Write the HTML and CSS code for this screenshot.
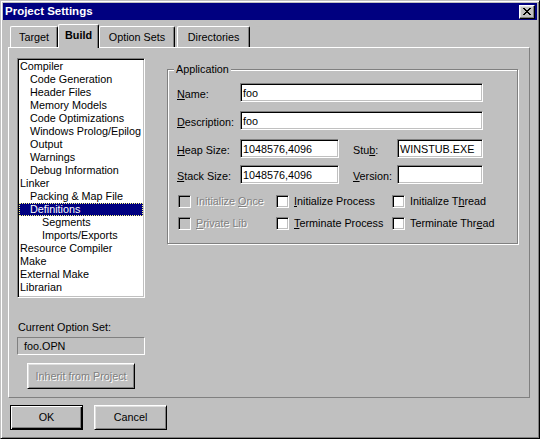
FILE: index.html
```html
<!DOCTYPE html>
<html>
<head>
<meta charset="utf-8">
<title>Project Settings</title>
<link rel="stylesheet" href="styles.css">
</head>
<body>
<div class="window">
  <div class="titlebar">
    <span class="title">Project Settings</span>
    <span class="close"><svg width="8" height="7" viewBox="0 0 8 7"><path d="M0 0h2v1H0zM6 0h2v1H6zM1 1h2v1H1zM5 1h2v1H5zM2 2h4v1H2zM3 3h2v1H3zM2 4h4v1H2zM1 5h2v1H1zM5 5h2v1H5zM0 6h2v1H0zM6 6h2v1H6z"/></svg></span>
  </div>
  <div class="tabs">
    <div class="tab t-target">Target</div>
    <div class="tab tab-active t-build">Build</div>
    <div class="tab t-opt">Option Sets</div>
    <div class="tab t-dir">Directories</div>
  </div>
  <div class="panel">
    <div class="leftcol">
      <ul class="list">
        <li>Compiler</li>
        <li class="l1">Code Generation</li>
        <li class="l1">Header Files</li>
        <li class="l1">Memory Models</li>
        <li class="l1">Code Optimizations</li>
        <li class="l1">Windows Prolog/Epilog</li>
        <li class="l1">Output</li>
        <li class="l1">Warnings</li>
        <li class="l1">Debug Information</li>
        <li>Linker</li>
        <li class="l1">Packing &amp; Map File</li>
        <li class="l1 sel">Definitions</li>
        <li class="l2">Segments</li>
        <li class="l2">Imports/Exports</li>
        <li>Resource Compiler</li>
        <li>Make</li>
        <li>External Make</li>
        <li>Librarian</li>
      </ul>
      <div class="cur-label">Current Option Set:</div>
      <div class="cur-field">foo.OPN</div>
      <div class="btn btn-disabled inherit"><span>Inherit from Project</span></div>
    </div>
    <fieldset class="group">
      <legend>Application</legend>
      <div class="form">
        <div class="lbl"><u>N</u>ame:</div>
        <div class="edit span4">foo</div>
        <div class="lbl"><u>D</u>escription:</div>
        <div class="edit span4">foo</div>
        <div class="lbl"><u>H</u>eap Size:</div>
        <div class="edit">1048576,4096</div>
        <div class="lbl c4">Stu<u>b</u>:</div>
        <div class="edit c5">WINSTUB.EXE</div>
        <div class="lbl"><u>S</u>tack Size:</div>
        <div class="edit">1048576,4096</div>
        <div class="lbl c4"><u>V</u>ersion:</div>
        <div class="edit c5"></div>
      </div>
      <div class="checks">
        <div class="chk disabled"><span class="box"></span><span>Initialize <u>O</u>nce</span></div>
        <div class="chk"><span class="box"></span><span><u>I</u>nitialize Process</span></div>
        <div class="chk"><span class="box"></span><span>Initialize T<u>h</u>read</span></div>
        <div class="chk disabled"><span class="box"></span><span><u>P</u>rivate Lib</span></div>
        <div class="chk"><span class="box"></span><span><u>T</u>erminate Process</span></div>
        <div class="chk"><span class="box"></span><span>Terminate Thr<u>e</u>ad</span></div>
      </div>
    </fieldset>
  </div>
  <div class="buttons">
    <div class="btn btn-default">OK</div>
    <div class="btn">Cancel</div>
  </div>
</div>
</body>
</html>
```

FILE: styles.css
```css
* { box-sizing: border-box; }
html, body { margin: 0; padding: 0; background: #c0c0c0; }
body {
  font-family: "Liberation Sans", Arial, sans-serif;
  font-size: 10.8px;
  line-height: 13px;
  color: #000;
}
u { text-decoration: underline; text-underline-offset: 1px; }

.window {
  width: 540px;
  height: 439px;
  border: 1px solid;
  border-color: #c0c0c0 #000 #000 #c0c0c0;
  box-shadow: inset 1px 1px #fff, inset -1px -1px #808080;
  padding: 2px;
  background: #c0c0c0;
  display: flex;
  flex-direction: column;
}

.titlebar {
  height: 17px;
  background: #000080;
  color: #fff;
  display: flex;
  align-items: center;
  justify-content: space-between;
  padding: 0 2px;
  flex: none;
}
.title { font-weight: bold; font-size: 11.5px; }
.close {
  width: 16px;
  height: 14px;
  background: #c0c0c0;
  border: 1px solid;
  border-color: #fff #000 #000 #fff;
  box-shadow: inset -1px -1px #808080, inset 1px 1px #dfdfdf;
  display: flex;
  align-items: center;
  justify-content: center;
}
.close svg { display: block; fill: #000; shape-rendering: crispEdges; }

.tabs {
  display: flex;
  align-items: flex-end;
  height: 23px;
  margin: 4px 0 0 7px;
  flex: none;
}
.tab {
  height: 21px;
  background: #c0c0c0;
  border-top: 1px solid #fff;
  border-left: 1px solid #fff;
  border-right: 1px solid #000;
  border-radius: 2px 2px 0 0;
  box-shadow: inset -1px 0 #808080;
  text-align: center;
  line-height: 20px;
  white-space: nowrap;
}
.tab-active {
  height: 24px;
  margin-bottom: -1px;
  font-weight: bold;
  position: relative;
  z-index: 1;
}
.t-target { width: 48px; }
.t-build { width: 41px; }
.t-opt { width: 76px; }
.t-dir { width: 73px; margin-left: 2px; }

.panel {
  width: 522px;
  height: 351px;
  margin-left: 5px;
  border: 1px solid;
  border-color: #fff #808080 #808080 #fff;
  display: flex;
  align-items: flex-start;
  padding: 10px 0 0 8px;
  flex: none;
}

.leftcol {
  width: 128px;
  display: flex;
  flex-direction: column;
  flex: none;
}
.list {
  list-style: none;
  margin: 0;
  padding: 1px;
  height: 240px;
  background: #fff;
  border: 1px solid;
  border-color: #808080 #fff #fff #808080;
  box-shadow: inset 1px 1px #000, inset -1px -1px #c0c0c0;
}
.list li {
  height: 13px;
  line-height: 13px;
  padding-left: 1px;
  white-space: nowrap;
}
.list li.l1 { padding-left: 11px; }
.list li.l2 { padding-left: 23px; }
.list li.sel {
  background: #000080;
  color: #fff;
  outline: 1px dotted #ffff80;
  outline-offset: -1px;
}
.cur-label { margin-top: 23px; padding-left: 1px; }
.cur-field {
  margin-top: 3px;
  height: 18px;
  border: 1px solid;
  border-color: #808080 #fff #fff #808080;
  padding-left: 6px;
  line-height: 16px;
}

.btn {
  display: flex;
  align-items: center;
  justify-content: center;
  background: #c0c0c0;
  border: 1px solid;
  border-color: #fff #000 #000 #fff;
  box-shadow: inset 1px 1px #dfdfdf, inset -1px -1px #808080;
  white-space: nowrap;
}
.btn-default {
  border-color: #000;
  box-shadow: inset 1px 1px #fff, inset -1px -1px #000, inset -2px -2px #808080;
}
.btn-disabled { color: #808080; text-shadow: 1px 1px 0 #fff; }
.inherit {
  margin-top: 8px;
  width: 108px;
  height: 26px;
  align-self: center;
}

.group {
  margin: 5px 0 0 22px;
  padding: 7px 0 13px 9px;
  width: 351px;
  min-width: 0;
  border: 1px solid #808080;
  box-shadow: inset 1px 1px #fff, 1px 1px #fff;
  flex: none;
}
.group legend {
  padding: 0 2px;
  margin-left: -3px;
  background: #c0c0c0;
  line-height: 13px;
}

.form {
  display: grid;
  grid-template-columns: 63px 99px 14px 44px 86px;
  grid-template-rows: 28px 28px 26px 19px;
  align-items: start;
}
.lbl { line-height: 19px; margin-top: 2px; white-space: nowrap; }
.edit {
  height: 19px;
  background: #fff;
  border: 1px solid;
  border-color: #808080 #fff #fff #808080;
  box-shadow: inset 1px 1px #000, inset -1px -1px #c0c0c0;
  padding: 1px 0 0 2px;
  line-height: 16px;
  white-space: nowrap;
  overflow: hidden;
}
.span4 { grid-column: 2 / 6; }
.c4 { grid-column: 4; }
.c5 { grid-column: 5; }

.checks {
  display: grid;
  grid-template-columns: 98px 116px auto;
  grid-template-rows: 13px 13px;
  row-gap: 9px;
  margin: 11px 0 0 1px;
}
.chk {
  display: flex;
  align-items: center;
  gap: 5px;
  white-space: nowrap;
  line-height: 13px;
}
.box {
  width: 13px;
  height: 13px;
  flex: none;
  background: #fff;
  border: 1px solid;
  border-color: #808080 #fff #fff #808080;
  box-shadow: inset 1px 1px #000, inset -1px -1px #c0c0c0;
}
.chk.disabled .box { background: #c0c0c0; }
.chk.disabled span + span { color: #808080; text-shadow: 1px 1px 0 #fff; }

.buttons {
  display: flex;
  gap: 11px;
  margin: 7px 0 0 7px;
  flex: none;
}
.buttons .btn { width: 73px; height: 25px; }
```
